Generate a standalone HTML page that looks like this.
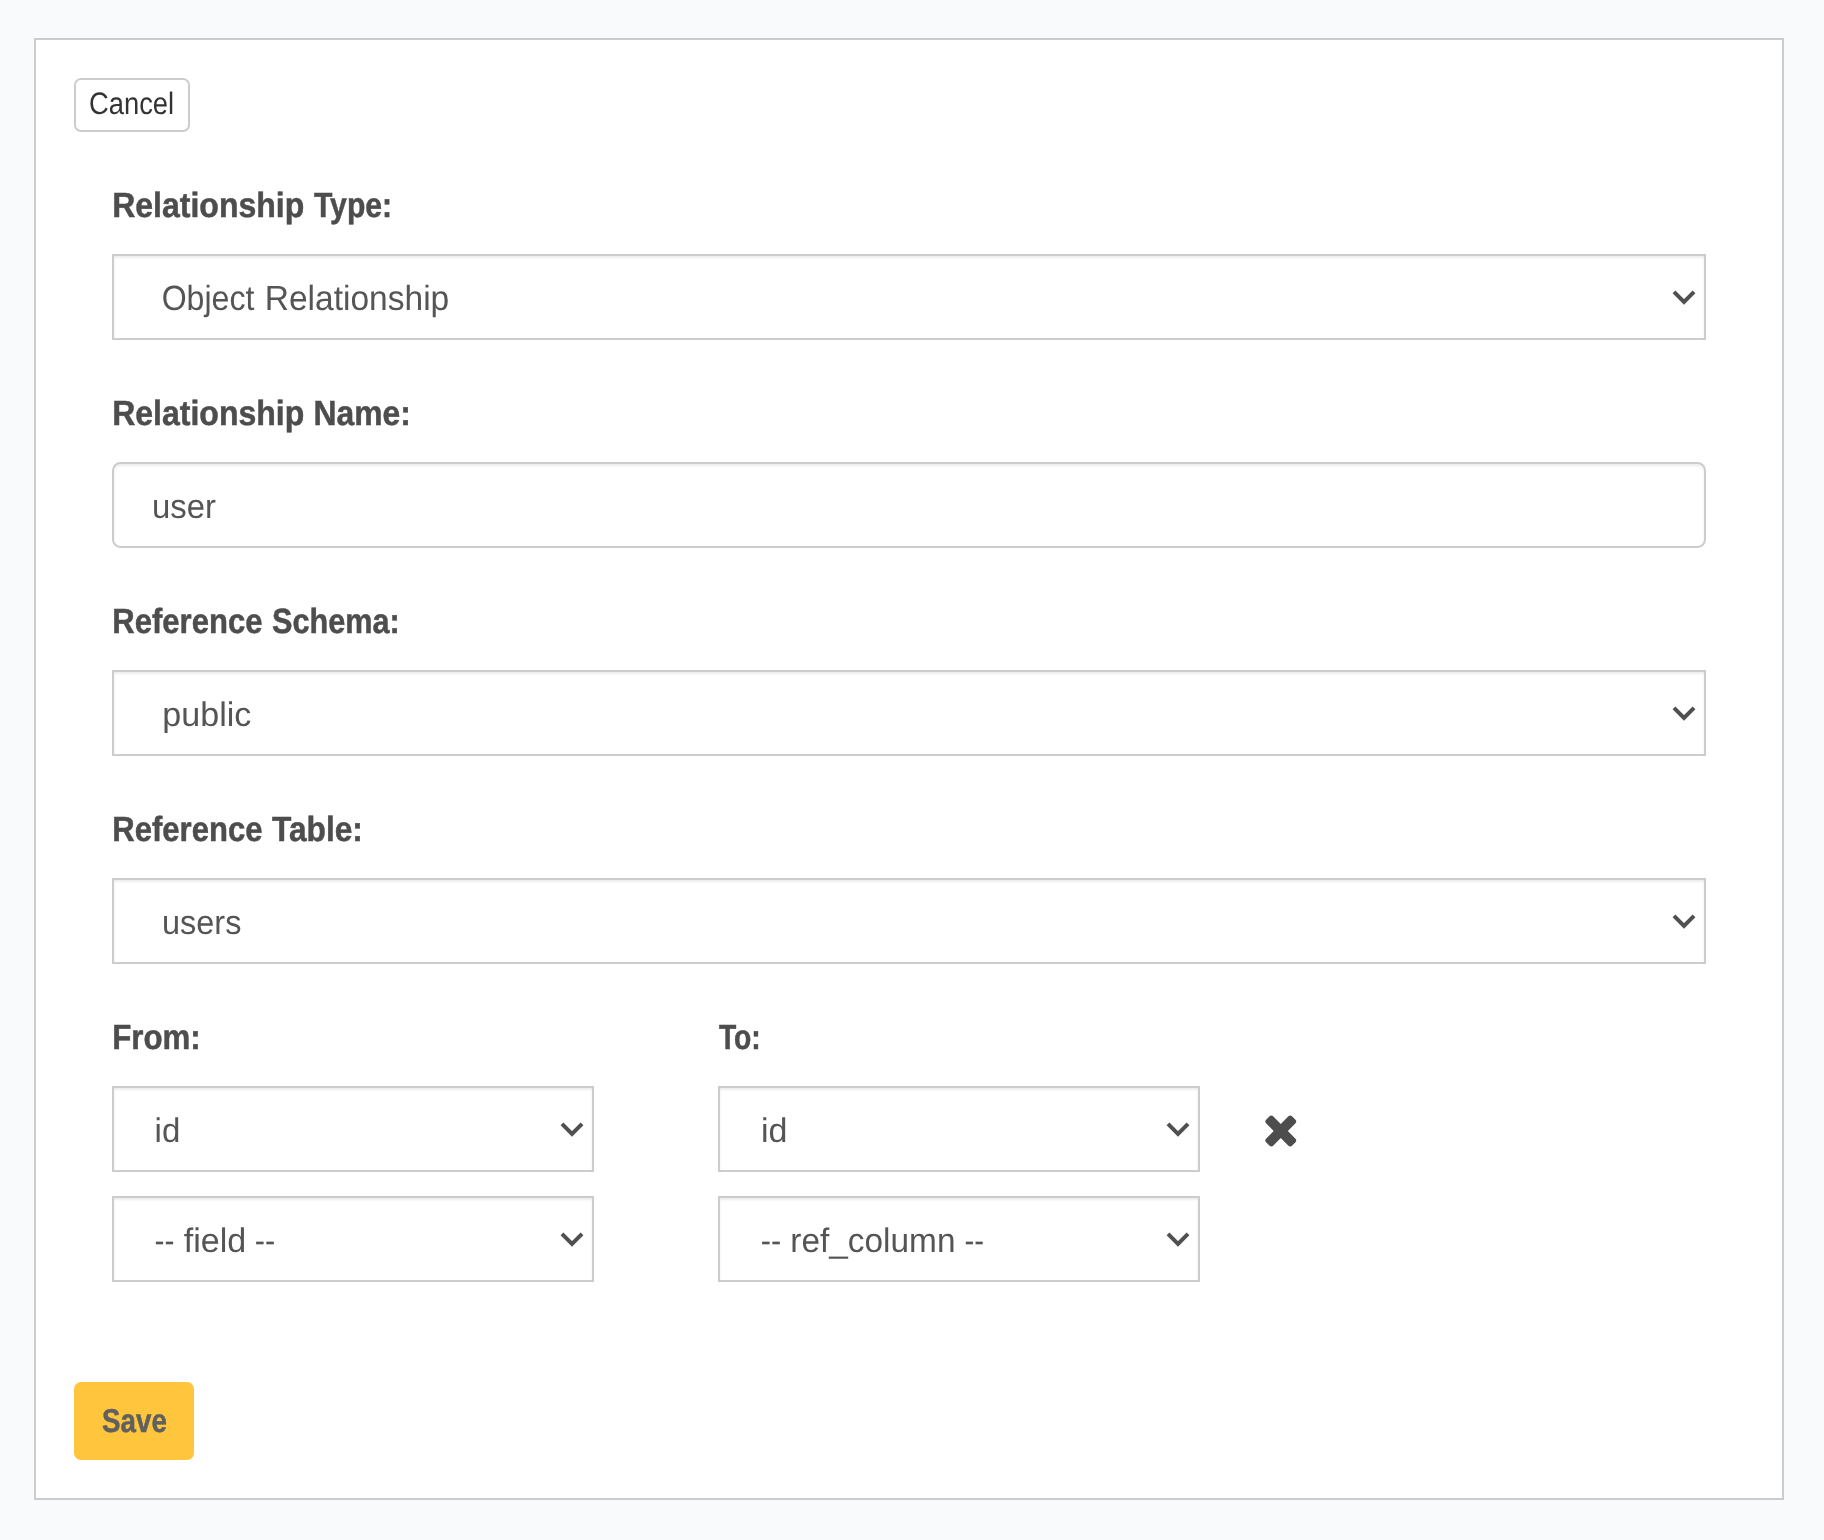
<!DOCTYPE html>
<html lang="en">
<head>
<meta charset="utf-8">
<title>Add relationship</title>
<style>
html,body{margin:0;padding:0}
body{width:1824px;height:1540px;background:#f8fafb;position:relative;overflow:hidden;font-family:"Liberation Sans",sans-serif}
.wrap{position:absolute;left:0;top:0;width:1824px;height:1540px;will-change:transform}
.panel{position:absolute;left:34px;top:38px;width:1746px;height:1458px;border:2px solid #cccccc;background:#ffffff}
.l{position:absolute;left:0;display:block;margin:0;padding:0;font-weight:400;line-height:normal;white-space:nowrap;text-rendering:geometricPrecision}
.l.b{font-weight:700;-webkit-text-stroke:0.5px currentColor}
.w{display:inline-block;width:0;overflow:visible;white-space:nowrap;transform-origin:0 0}
.sel{position:absolute;box-sizing:border-box;height:86px;border:2px solid #cccccc;background:#ffffff;box-shadow:inset 0 2px 2.5px rgba(0,0,0,.08)}
.inp{border-radius:8.5px}
.ic{position:absolute;display:block}
.btn{position:absolute;box-sizing:border-box;margin:0;padding:0}
.cancel{left:74px;top:78px;width:116px;height:54px;border:2px solid #cccccc;border-radius:7px;background:#ffffff}
.save{left:74px;top:1382px;width:120px;height:78px;border-radius:7px;background:#fec53d}
</style>
</head>
<body>
<div class="wrap">
<div class="panel"></div>
<!-- cancel -->
<div class="btn cancel"><span class="l" style="top:6px;font-size:31px;color:#333333"><span class="w" style="transform:translateX(13.00px) scaleX(0.8819)">Cancel</span></span></div>
<!-- relationship type -->
<label class="l b" style="top:186px;font-size:35px;color:#4d4d4d"><span class="w" style="transform:translateX(112.13px) scaleX(0.9152)">Relationship</span> <span class="w" style="transform:translateX(303.95px) scaleX(0.8609)">Type:</span></label>
<div class="sel" style="left:112px;top:254px;width:1594px"><span class="l" style="top:23px;font-size:35px;color:#555555"><span class="w" style="transform:translateX(47.64px) scaleX(0.9172)">Object</span> <span class="w" style="transform:translateX(140.68px) scaleX(0.9581)">Relationship</span></span><svg class="ic" style="left:1555px;top:30px" width="30" height="22" viewBox="0 0 30 22"><path d="M5 5.8 L15 15.85 L25 5.8" fill="none" stroke="#505050" stroke-width="4"/></svg></div>
<!-- relationship name -->
<label class="l b" style="top:394px;font-size:35px;color:#4d4d4d"><span class="w" style="transform:translateX(112.13px) scaleX(0.9152)">Relationship</span> <span class="w" style="transform:translateX(303.50px) scaleX(0.9090)">Name:</span></label>
<div class="sel inp" style="left:112px;top:462px;width:1594px"><span class="l" style="top:24px;font-size:34px;color:#555555"><span class="w" style="transform:translateX(38.03px) scaleX(0.9664)">user</span></span></div>
<!-- reference schema -->
<label class="l b" style="top:602px;font-size:35px;color:#4d4d4d"><span class="w" style="transform:translateX(112.37px) scaleX(0.8865)">Reference</span> <span class="w" style="transform:translateX(262.09px) scaleX(0.8754)">Schema:</span></label>
<div class="sel" style="left:112px;top:670px;width:1594px"><span class="l" style="top:24px;font-size:34px;color:#555555"><span class="w" style="transform:translateX(48.35px) scaleX(1.0015)">public</span></span><svg class="ic" style="left:1555px;top:30px" width="30" height="22" viewBox="0 0 30 22"><path d="M5 5.8 L15 15.85 L25 5.8" fill="none" stroke="#505050" stroke-width="4"/></svg></div>
<!-- reference table -->
<label class="l b" style="top:810px;font-size:35px;color:#4d4d4d"><span class="w" style="transform:translateX(112.37px) scaleX(0.8865)">Reference</span> <span class="w" style="transform:translateX(261.91px) scaleX(0.9052)">Table:</span></label>
<div class="sel" style="left:112px;top:878px;width:1594px"><span class="l" style="top:24px;font-size:34px;color:#555555"><span class="w" style="transform:translateX(47.99px) scaleX(0.9551)">users</span></span><svg class="ic" style="left:1555px;top:30px" width="30" height="22" viewBox="0 0 30 22"><path d="M5 5.8 L15 15.85 L25 5.8" fill="none" stroke="#505050" stroke-width="4"/></svg></div>
<!-- column mapping -->
<label class="l b" style="top:1018px;font-size:35px;color:#4d4d4d"><span class="w" style="transform:translateX(112.18px) scaleX(0.8928)">From:</span></label>
<label class="l b" style="top:1018px;font-size:35px;color:#4d4d4d"><span class="w" style="transform:translateX(718.91px) scaleX(0.8082)">To:</span></label>
<div class="sel" style="left:112px;top:1086px;width:482px"><span class="l" style="top:24px;font-size:34px;color:#555555"><span class="w" style="transform:translateX(40.61px) scaleX(0.9711)">id</span></span><svg class="ic" style="left:443px;top:30px" width="30" height="22" viewBox="0 0 30 22"><path d="M5 5.8 L15 15.85 L25 5.8" fill="none" stroke="#505050" stroke-width="4"/></svg></div>
<div class="sel" style="left:718px;top:1086px;width:482px"><span class="l" style="top:24px;font-size:34px;color:#555555"><span class="w" style="transform:translateX(40.91px) scaleX(1.0014)">id</span></span><svg class="ic" style="left:443px;top:30px" width="30" height="22" viewBox="0 0 30 22"><path d="M5 5.8 L15 15.85 L25 5.8" fill="none" stroke="#505050" stroke-width="4"/></svg></div>
<svg class="ic" style="left:1265px;top:1115px" width="32" height="32" viewBox="97.5 345 1230 1230"><path fill="#4d4d4d" d="M1298 1322q0 40-28 68l-136 136q-28 28-68 28t-68-28l-294-294-294 294q-28 28-68 28t-68-28l-136-136q-28-28-28-68t28-68l294-294-294-294q-28-28-28-68t28-68l136-136q28-28 68-28t68 28l294 294 294-294q28-28 68-28t68 28l136 136q28 28 28 68t-28 68l-294 294 294 294q28 28 28 68z"/></svg>
<div class="sel" style="left:112px;top:1196px;width:482px"><span class="l" style="top:24px;font-size:34px;color:#555555"><span class="w" style="transform:translateX(40.50px) scaleX(0.8787)">--</span> <span class="w" style="transform:translateX(60.73px) scaleX(1.0034)">field</span> <span class="w" style="transform:translateX(121.75px) scaleX(0.9026)">--</span></span><svg class="ic" style="left:443px;top:30px" width="30" height="22" viewBox="0 0 30 22"><path d="M5 5.8 L15 15.85 L25 5.8" fill="none" stroke="#505050" stroke-width="4"/></svg></div>
<div class="sel" style="left:718px;top:1196px;width:482px"><span class="l" style="top:24px;font-size:34px;color:#555555"><span class="w" style="transform:translateX(40.82px) scaleX(0.9000)">--</span> <span class="w" style="transform:translateX(61.33px) scaleX(0.9819)">ref_column</span> <span class="w" style="transform:translateX(225.58px) scaleX(0.8637)">--</span></span><svg class="ic" style="left:443px;top:30px" width="30" height="22" viewBox="0 0 30 22"><path d="M5 5.8 L15 15.85 L25 5.8" fill="none" stroke="#505050" stroke-width="4"/></svg></div>
<!-- save -->
<div class="btn save"><span class="l b" style="top:20px;font-size:33px;color:#606060"><span class="w" style="transform:translateX(28.11px) scaleX(0.8402)">Save</span></span></div>
</div>
</body>
</html>
